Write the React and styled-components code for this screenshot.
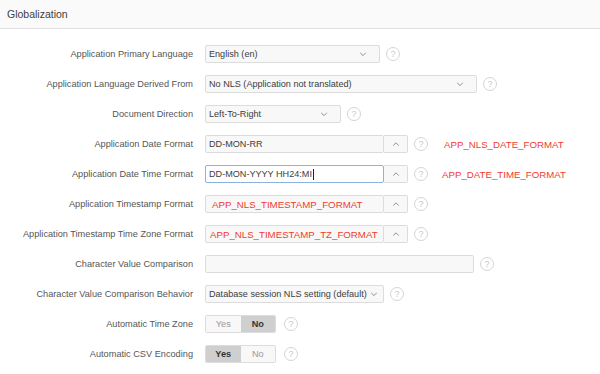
import styled, {createGlobalStyle} from "styled-components"

const GlobalStyle=createGlobalStyle`
    body{
        margin:0;
        background:#fff;
        font-family:"Liberation Sans", Arial, sans-serif;
    }
`

const StyledRegion=styled.div`
    width:600px;
    height:374px;
    overflow:hidden;
    background:#fff;
`
const StyledHeader=styled.div`
    height:29px;
    box-sizing:border-box;
    background:#fafafa;
    border-bottom:1px solid #dedede;
    padding-left:7px;
    display:flex;
    align-items:center;
    font-size:10.5px;
    color:#404040;
`
const StyledBody=styled.div`
    padding-top:10px;
    display:flex;
    flex-direction:column;
`
const StyledRow=styled.div`
    height:30px;
    display:grid;
    grid-template-columns:193px auto;
    column-gap:12px;
    align-items:center;
`
const StyledLabel=styled.div`
    text-align:right;
    font-size:9.2px;
    color:#555;
    white-space:nowrap;
`
const StyledField=styled.div`
    display:flex;
    align-items:center;
    gap:6px;
`
const StyledBox=styled.div`
    width:${props=>props.$w}px;
    height:18px;
    box-sizing:border-box;
    border:1px solid ${props=>props.$focus?"#8fb1de":"#dcdcdc"};
    border-radius:2px;
    background:${props=>props.$focus?"#fff":"#f8f8f8"};
    display:flex;
    align-items:center;
    padding-left:${props=>props.$pad??3}px;
    font-size:${props=>props.$red?"9.7px":"9.1px"};
    color:${props=>props.$red?"#ef3b2f":"#3c3c3c"};
    white-space:nowrap;
    overflow:hidden;
`
const StyledSelectText=styled.span`
    flex:1;
`
const StyledChevron=styled.svg`
    width:8px;
    height:8px;
    margin-right:${props=>props.$mr??12}px;
    flex:none;
`
const StyledPopupGroup=styled.div`
    display:flex;
    height:18px;
`
const StyledPopupBtn=styled.div`
    width:24px;
    height:18px;
    box-sizing:border-box;
    border:1px solid #dcdcdc;
    border-left:none;
    border-radius:0 2px 2px 0;
    background:#f8f8f8;
    display:flex;
    align-items:center;
    justify-content:center;
`
const StyledCaret=styled.span`
    display:inline-block;
    width:1px;
    height:11px;
    background:#222;
    margin-left:1px;
`
const StyledHelp=styled.div`
    width:12px;
    height:12px;
    border:1px solid #d4d4d4;
    border-radius:50%;
    color:#c8c8c8;
    font-size:9px;
    display:flex;
    align-items:center;
    justify-content:center;
    flex:none;
    margin-left:${props=>props.$ml??0}px;
`
const StyledNote=styled.span`
    color:#ef3b2f;
    font-size:9.7px;
    margin-left:${props=>props.$ml}px;
    white-space:nowrap;
`
const StyledToggle=styled.div`
    display:flex;
    width:71px;
    height:18px;
    box-sizing:border-box;
    border:1px solid #dcdcdc;
    border-radius:2px;
    overflow:hidden;
`
const StyledToggleItem=styled.div`
    flex:1;
    display:flex;
    align-items:center;
    justify-content:center;
    font-size:9.2px;
    background:${props=>props.$on?"#cfcfcf":"#f8f8f8"};
    color:${props=>props.$on?"#333":"#999"};
    font-weight:${props=>props.$on?"bold":"normal"};
`

function Chevron({up, mr}){
    return(
        <StyledChevron $mr={mr} viewBox="0 0 10 10">
            <path d={up?"M1.5 7 L5 3.5 L8.5 7":"M1.5 3.5 L5 7 L8.5 3.5"} fill="none" stroke="#666" strokeWidth="0.9"/>
        </StyledChevron>
    )
}

function Help({ml}){
    return <StyledHelp $ml={ml}>?</StyledHelp>
}

function Select({w, text, mr}){
    return(
        <StyledBox $w={w}>
            <StyledSelectText>{text}</StyledSelectText>
            <Chevron mr={mr}/>
        </StyledBox>
    )
}

function Popup({text, red, focus, pad, caret}){
    return(
        <StyledPopupGroup>
            <StyledBox $w={179} $red={red} $focus={focus} $pad={pad}>
                {text}{caret && <StyledCaret/>}
            </StyledBox>
            <StyledPopupBtn><Chevron up mr={0}/></StyledPopupBtn>
        </StyledPopupGroup>
    )
}

function Toggle({value}){
    return(
        <StyledToggle>
            <StyledToggleItem $on={value==="Yes"}>Yes</StyledToggleItem>
            <StyledToggleItem $on={value==="No"}>No</StyledToggleItem>
        </StyledToggle>
    )
}

function Row({label, children}){
    return(
        <StyledRow>
            <StyledLabel>{label}</StyledLabel>
            <StyledField>{children}</StyledField>
        </StyledRow>
    )
}

export default function App(){
    return(
        <StyledRegion>
            <GlobalStyle/>
            <StyledHeader>Globalization</StyledHeader>
            <StyledBody>
                <Row label="Application Primary Language">
                    <Select w={175} text="English (en)"/>
                    <Help/>
                </Row>
                <Row label="Application Language Derived From">
                    <Select w={272} text="No NLS (Application not translated)"/>
                    <Help/>
                </Row>
                <Row label="Document Direction">
                    <Select w={136} text="Left-To-Right"/>
                    <Help/>
                </Row>
                <Row label="Application Date Format">
                    <Popup text="DD-MON-RR"/>
                    <Help/>
                    <StyledNote $ml={10}>APP_NLS_DATE_FORMAT</StyledNote>
                </Row>
                <Row label="Application Date Time Format">
                    <Popup text="DD-MON-YYYY HH24:MI" focus caret/>
                    <Help/>
                    <StyledNote $ml={8}>APP_DATE_TIME_FORMAT</StyledNote>
                </Row>
                <Row label="Application Timestamp Format">
                    <Popup text="APP_NLS_TIMESTAMP_FORMAT" red pad={6}/>
                    <Help/>
                </Row>
                <Row label="Application Timestamp Time Zone Format">
                    <Popup text="APP_NLS_TIMESTAMP_TZ_FORMAT" red pad={4}/>
                    <Help/>
                </Row>
                <Row label="Character Value Comparison">
                    <StyledBox $w={269}/>
                    <Help/>
                </Row>
                <Row label="Character Value Comparison Behavior">
                    <Select w={179} text="Database session NLS setting (default)" mr={5}/>
                    <Help/>
                </Row>
                <Row label="Automatic Time Zone">
                    <Toggle value="No"/>
                    <Help ml={2}/>
                </Row>
                <Row label="Automatic CSV Encoding">
                    <Toggle value="Yes"/>
                    <Help ml={2}/>
                </Row>
            </StyledBody>
        </StyledRegion>
    )
}
